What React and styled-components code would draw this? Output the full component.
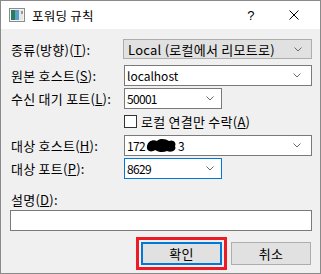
import React from "react";
import styled, { createGlobalStyle } from "styled-components";

const GlobalStyle = createGlobalStyle`
  html, body { margin: 0; padding: 0; background: #ffffff; }
  body {
    font-family: "Noto Sans CJK KR", "Noto Sans", sans-serif;
    font-size: 13px;
    letter-spacing: 0.25px;
    color: #000;
  }
  * { box-sizing: border-box; }
`;

const Window = styled.div`
  width: 321px;
  height: 274px;
  border: 1px solid #8a8a8a;
  background: #f0f0f0;
  display: flex;
  flex-direction: column;
  overflow: hidden;
`;

const TitleBar = styled.div`
  height: 28px;
  flex: none;
  background: #ffffff;
  display: flex;
  align-items: center;
  padding-left: 8px;
`;

const TitleText = styled.span`
  margin-left: 7px;
  line-height: 15px;
  font-size: 12.5px;
`;

const Controls = styled.div`
  margin-left: auto;
  display: flex;
  height: 100%;
`;

const CtrlBtn = styled.div`
  width: ${(p) => p.$w}px;
  height: 100%;
  display: flex;
  align-items: center;
  justify-content: center;
  font-family: "Liberation Sans", sans-serif;
  font-size: 13px;
`;

const Body = styled.div`
  flex: 1;
  display: flex;
  flex-direction: column;
  padding: 0 8px 0 9px;
`;

const Row = styled.div`
  display: grid;
  grid-template-columns: 114px 188px;
  align-items: center;
  margin-top: ${(p) => p.$mt}px;
  height: ${(p) => p.$h}px;
`;

const Label = styled.label`
  padding-left: 1px;
  white-space: nowrap;
  line-height: 15px;
`;

const DropButton = styled.div`
  height: 20px;
  margin-left: -1px;
  background: #e1e1e1;
  border: 1px solid #adadad;
  display: flex;
  align-items: center;
  padding: 0 9px 0 4px;
  line-height: 15px;
  white-space: nowrap;
`;

const Combo = styled.div`
  height: 21px;
  width: ${(p) => p.$w}px;
  background: #ffffff;
  border: 1px solid ${(p) => (p.$focus ? "#0078d7" : "#7a7a7a")};
  display: flex;
  align-items: center;
  padding: 0 ${(p) => p.$pr}px 0 2px;
  line-height: 15px;
  white-space: nowrap;
`;

const Value = styled.span`
  flex: 1;
  display: flex;
  align-items: center;
  font-size: 12px;
  letter-spacing: ${(p) => (p.$num ? "-0.7px" : "0")};
`;

const ComboText = styled.span`
  flex: 1;
`;

const CheckLine = styled.div`
  display: flex;
  align-items: center;
  gap: 4px;
  line-height: 15px;
  white-space: nowrap;
`;

const CheckBox = styled.span`
  width: 13px;
  height: 13px;
  border: 1px solid #333333;
  background: #ffffff;
  flex: none;
`;

const TextArea = styled.div`
  margin-top: ${(p) => p.$mt}px;
  width: 302px;
  height: 21px;
  border: 1px solid #7a7a7a;
  background: #ffffff;
`;

const DescLabel = styled(Label)`
  display: block;
  margin-top: 13px;
  height: 14px;
`;

const ButtonRow = styled.div`
  margin-top: 6px;
  display: flex;
  justify-content: flex-end;
  align-items: center;
  gap: 4px;
  padding-right: 1px;
`;

const Highlight = styled.div`
  border: 3px solid #ed1c24;
  padding: 2px;
  display: flex;
`;

const Button = styled.div`
  width: ${(p) => p.$w}px;
  height: 23px;
  background: #e1e1e1;
  border: ${(p) => (p.$default ? "2px solid #0078d7" : "1px solid #adadad")};
  display: flex;
  align-items: center;
  justify-content: center;
  line-height: 15px;
`;

const Chevron = () => (
  <svg width="8" height="5" viewBox="0 0 8 5">
    <path d="M0.5 0.5 L4 4 L7.5 0.5" fill="none" stroke="#6a6a6a" strokeWidth="1" />
  </svg>
);

const AppIcon = () => (
  <svg width="16" height="14" viewBox="0 0 16 14">
    <rect x="0.5" y="0.5" width="15" height="13" fill="#f4f4f4" stroke="#8c8c8c" />
    <rect x="2" y="2" width="4" height="10" fill="#2e7a5c" />
    <rect x="6" y="2" width="4" height="10" fill="#5a9fc6" />
    <rect x="10" y="2" width="4" height="10" fill="#e6e6e6" />
    <rect x="12" y="3" width="2" height="3" fill="#9a9a9a" />
  </svg>
);

const CloseIcon = () => (
  <svg width="10" height="10" viewBox="0 0 10 10">
    <path d="M0.5 0.5 L9.5 9.5 M9.5 0.5 L0.5 9.5" stroke="#000" strokeWidth="1" />
  </svg>
);

const Blob = () => (
  <svg width="31" height="15" viewBox="0 0 31 15" style={{ margin: "0 1px 0 1px" }}>
    <path
      d="M1 8 C2 3,7 1,11 3 C14 0,20 1,23 3 C27 1,31 5,29 8 C31 12,26 15,21 13 C17 15,12 14,9 12 C5 15,0 13,1 8Z"
      fill="#000"
    />
  </svg>
);

export default function App() {
  return (
    <>
      <GlobalStyle />
      <Window>
        <TitleBar>
          <AppIcon />
          <TitleText>포워딩 규칙</TitleText>
          <Controls>
            <CtrlBtn $w={34}>?</CtrlBtn>
            <CtrlBtn $w={52}>
              <CloseIcon />
            </CtrlBtn>
          </Controls>
        </TitleBar>
        <Body>
          <Row $mt={10} $h={20}>
            <Label>
              종류(방향)(<u>T</u>):
            </Label>
            <DropButton>
              <ComboText>Local (로컬에서 리모트로)</ComboText>
              <Chevron />
            </DropButton>
          </Row>
          <Row $mt={6} $h={21}>
            <Label>
              원본 호스트(<u>S</u>):
            </Label>
            <Combo $w={188} $pr={10}>
              <Value>localhost</Value>
              <Chevron />
            </Combo>
          </Row>
          <Row $mt={2} $h={21}>
            <Label>
              수신 대기 포트(<u>L</u>):
            </Label>
            <Combo $w={98} $pr={7}>
              <Value $num>50001</Value>
              <Chevron />
            </Combo>
          </Row>
          <Row $mt={5} $h={13}>
            <span />
            <CheckLine>
              <CheckBox />
              <span>
                로컬 연결만 수락(<u>A</u>)
              </span>
            </CheckLine>
          </Row>
          <Row $mt={8} $h={21}>
            <Label>
              대상 호스트(<u>H</u>):
            </Label>
            <Combo $w={188} $pr={10}>
              <Value $num>
                172
                <Blob />
                3
              </Value>
              <Chevron />
            </Combo>
          </Row>
          <Row $mt={2} $h={21}>
            <Label>
              대상 포트(<u>P</u>):
            </Label>
            <Combo $w={98} $pr={7} $focus>
              <Value $num>8629</Value>
              <Chevron />
            </Combo>
          </Row>
          <DescLabel>
            설명(<u>D</u>):
          </DescLabel>
          <TextArea $mt={4} />
          <ButtonRow>
            <Highlight>
              <Button $w={81} $default>
                확인
              </Button>
            </Highlight>
            <Button $w={80}>취소</Button>
          </ButtonRow>
        </Body>
      </Window>
    </>
  );
}
